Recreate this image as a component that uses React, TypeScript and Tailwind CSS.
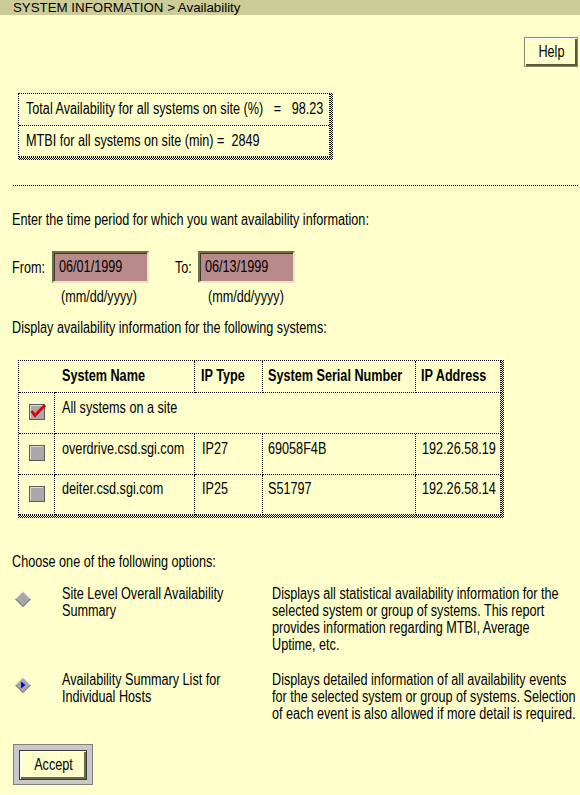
import React from "react";

const HATCH =
  "bg-[image:repeating-conic-gradient(#000_0%_25%,#ffffcc_0%_50%)] bg-[length:2px_2px]";

// Condensed text: Liberation Sans compressed horizontally (like Helvetica Narrow)
const N = "inline-block origin-left scale-x-[0.79] whitespace-nowrap";
const NB = "block origin-left scale-x-[0.79] whitespace-nowrap";
const NC = "inline-block scale-x-[0.79] whitespace-nowrap";

function Checkbox({ checked }: { checked?: boolean }) {
  return (
    <svg width="16" height="16" viewBox="0 0 16 16" overflow="visible">
      <rect x="0.5" y="0.5" width="15" height="15" fill="#a9a9a9" stroke="#5a5a5a" />
      <path d="M1.5 14 V1.5 H14" stroke="#dcdcdc" fill="none" />
      {checked && (
        <path
          d="M2.5 7 L6 11.5 L16 1"
          stroke="#e00000"
          strokeWidth="2.8"
          strokeLinejoin="miter"
          fill="none"
        />
      )}
    </svg>
  );
}

function Diamond({ selected }: { selected?: boolean }) {
  return (
    <svg width="16" height="16" viewBox="0 0 16 16">
      <polygon points="8,0.5 15.5,8 8,15.5 0.5,8" fill="#a8a8a8" />
      <polyline points="0.5,8 8,0.5 15.5,8" stroke="#e6e6e6" fill="none" />
      <polyline points="15.5,8 8,15.5 0.5,8" stroke="#505050" fill="none" />
      {selected && <polygon points="6,4.5 6,11.5 10.5,8" fill="#0000ff" />}
    </svg>
  );
}

const cell = "border-r border-b border-dotted border-black";

export default function App() {
  return (
    <div className="w-full min-h-screen overflow-hidden bg-[#ffffcc] text-black font-['Liberation_Sans',Arial,sans-serif] text-[16px] leading-[17px] flex flex-col">
      {/* Title bar */}
      <div className="h-[15px] bg-[#cccc99] pl-[13px] text-[13.3px] leading-[15px] whitespace-nowrap">
        SYSTEM INFORMATION &gt; Availability
      </div>

      {/* Help */}
      <div className="mt-[22px] flex justify-end pr-[2px]">
        <button className="w-[54px] h-[30px] bg-[#ffffcc] border border-[#8a8a6a] shadow-[inset_1px_1px_0_#ffffff,inset_-2px_-2px_0_#5a5a3a] flex items-center justify-center pb-[1px]">
          <span className={NC}>Help</span>
        </button>
      </div>

      {/* Stats box */}
      <div className={`ml-[14px] mt-[22px] w-[319px] border-t-4 border-l-4 border-[#ffffcc] pr-[3px] pb-[3px] ${HATCH}`}>
        <div className="bg-[#ffffcc] border border-dotted border-black">
          <div className="h-[32px] flex items-center pl-[7px] pb-[2px] border-b border-dotted border-black">
            <span className={N}>
              Total Availability for all systems on site (%)&nbsp;&nbsp;&nbsp;=&nbsp;&nbsp;&nbsp;98.23
            </span>
          </div>
          <div className="h-[30px] flex items-center pl-[7px] pb-[2px]">
            <span className={N}>MTBI for all systems on site (min) = &nbsp;2849</span>
          </div>
        </div>
      </div>

      {/* Dotted rule */}
      <div className="mt-[25px] ml-[13px] mr-[2px] border-t border-dotted border-black" />

      <div className="mt-[25px] pl-[12px]">
        <span className={NB}>Enter the time period for which you want availability information:</span>
      </div>

      {/* Date fields */}
      <div className="mt-[23px] pl-[12px] flex items-center">
        <span className={`${N} w-[40px]`}>From:</span>
        <div className="w-[97px] h-[32px] bg-[#b98a8a] border-2 border-t-[#6e6e4a] border-l-[#6e6e4a] border-b-[#e8e8c0] border-r-[#e8e8c0] shadow-[inset_1px_1px_0_#3a3a2a] flex items-center pl-[5px] pb-[1px]">
          <span className={N}>06/01/1999</span>
        </div>
        <span className={`${N} ml-[26px] w-[23px]`}>To:</span>
        <div className="w-[97px] h-[32px] bg-[#b98a8a] border-2 border-t-[#6e6e4a] border-l-[#6e6e4a] border-b-[#e8e8c0] border-r-[#e8e8c0] shadow-[inset_1px_1px_0_#3a3a2a] flex items-center pl-[5px] pb-[1px]">
          <span className={N}>06/13/1999</span>
        </div>
      </div>
      <div className="mt-[5px] pl-[61px] flex">
        <span className={`${N} w-[147px]`}>(mm/dd/yyyy)</span>
        <span className={N}>(mm/dd/yyyy)</span>
      </div>

      <div className="mt-[14px] pl-[12px]">
        <span className={NB}>Display availability information for the following systems:</span>
      </div>

      {/* Systems table */}
      <div className={`ml-[14px] mt-[20px] w-[490px] border-t-4 border-l-4 border-[#ffffcc] pr-[3px] pb-[3px] ${HATCH}`}>
        <div className="bg-[#ffffcc] border-t border-l border-dotted border-black grid grid-cols-[36px_140px_68px_153px_85px]">
          {/* header */}
          <div className="h-[32px] border-b border-dotted border-black" />
          <div className={`${cell} h-[32px] flex items-center pl-[7px] pb-[2px] font-bold`}>
            <span className={N}>System Name</span>
          </div>
          <div className={`${cell} h-[32px] flex items-center pl-[6px] pb-[2px] font-bold`}>
            <span className={N}>IP Type</span>
          </div>
          <div className={`${cell} h-[32px] flex items-center pl-[5px] pb-[2px] font-bold`}>
            <span className={N}>System Serial Number</span>
          </div>
          <div className={`${cell} h-[32px] flex items-center pl-[5px] pb-[2px] font-bold`}>
            <span className={N}>IP Address</span>
          </div>

          {/* row 1 */}
          <div className={`${cell} h-[41px] flex justify-center pt-[11px]`}>
            <Checkbox checked />
          </div>
          <div className={`${cell} col-span-4 h-[41px] pl-[7px] pt-[6px]`}>
            <span className={N}>All systems on a site</span>
          </div>

          {/* row 2 */}
          <div className={`${cell} h-[41px] flex justify-center pt-[11px]`}>
            <Checkbox />
          </div>
          <div className={`${cell} h-[41px] pl-[7px] pt-[6px]`}>
            <span className={N}>overdrive.csd.sgi.com</span>
          </div>
          <div className={`${cell} h-[41px] pl-[7px] pt-[6px]`}>
            <span className={N}>IP27</span>
          </div>
          <div className={`${cell} h-[41px] pl-[5px] pt-[6px]`}>
            <span className={N}>69058F4B</span>
          </div>
          <div className={`${cell} h-[41px] pl-[6px] pt-[6px]`}>
            <span className={N}>192.26.58.19</span>
          </div>

          {/* row 3 */}
          <div className={`${cell} h-[40px] flex justify-center pt-[11px]`}>
            <Checkbox />
          </div>
          <div className={`${cell} h-[40px] pl-[7px] pt-[5px]`}>
            <span className={N}>deiter.csd.sgi.com</span>
          </div>
          <div className={`${cell} h-[40px] pl-[7px] pt-[5px]`}>
            <span className={N}>IP25</span>
          </div>
          <div className={`${cell} h-[40px] pl-[5px] pt-[5px]`}>
            <span className={N}>S51797</span>
          </div>
          <div className={`${cell} h-[40px] pl-[6px] pt-[5px]`}>
            <span className={N}>192.26.58.14</span>
          </div>
        </div>
      </div>

      <div className="mt-[35px] pl-[12px]">
        <span className={NB}>Choose one of the following options:</span>
      </div>

      {/* Options */}
      <div className="mt-[15px] ml-[15px] grid grid-cols-[47px_210px_1fr]">
        <div className="pt-[6px]">
          <Diamond />
        </div>
        <div>
          <span className={NB}>Site Level Overall Availability</span>
          <span className={NB}>Summary</span>
        </div>
        <div>
          <span className={NB}>Displays all statistical availability information for the</span>
          <span className={NB}>selected system or group of systems. This report</span>
          <span className={NB}>provides information regarding MTBI, Average</span>
          <span className={NB}>Uptime, etc.</span>
        </div>

        <div className="pt-[6px] mt-[18px]">
          <Diamond selected />
        </div>
        <div className="mt-[18px]">
          <span className={NB}>Availability Summary List for</span>
          <span className={NB}>Individual Hosts</span>
        </div>
        <div className="mt-[18px]">
          <span className={NB}>Displays detailed information of all availability events</span>
          <span className={NB}>for the selected system or group of systems. Selection</span>
          <span className={NB}>of each event is also allowed if more detail is required.</span>
        </div>
      </div>

      {/* Accept */}
      <div className="ml-[13px] mt-[22px] w-[80px] h-[41px] border border-[#808080] bg-[#c8c8c8] pt-[5px] pl-[5px] pr-[5px] pb-[4px]">
        <button className="w-full h-full bg-[#ffffcc] border border-[#3a3a3a] shadow-[inset_1px_1px_0_#ffffff,inset_-2px_-2px_0_#6a6a4a] flex items-center justify-center pb-[2px]">
          <span className={NC}>Accept</span>
        </button>
      </div>
    </div>
  );
}
